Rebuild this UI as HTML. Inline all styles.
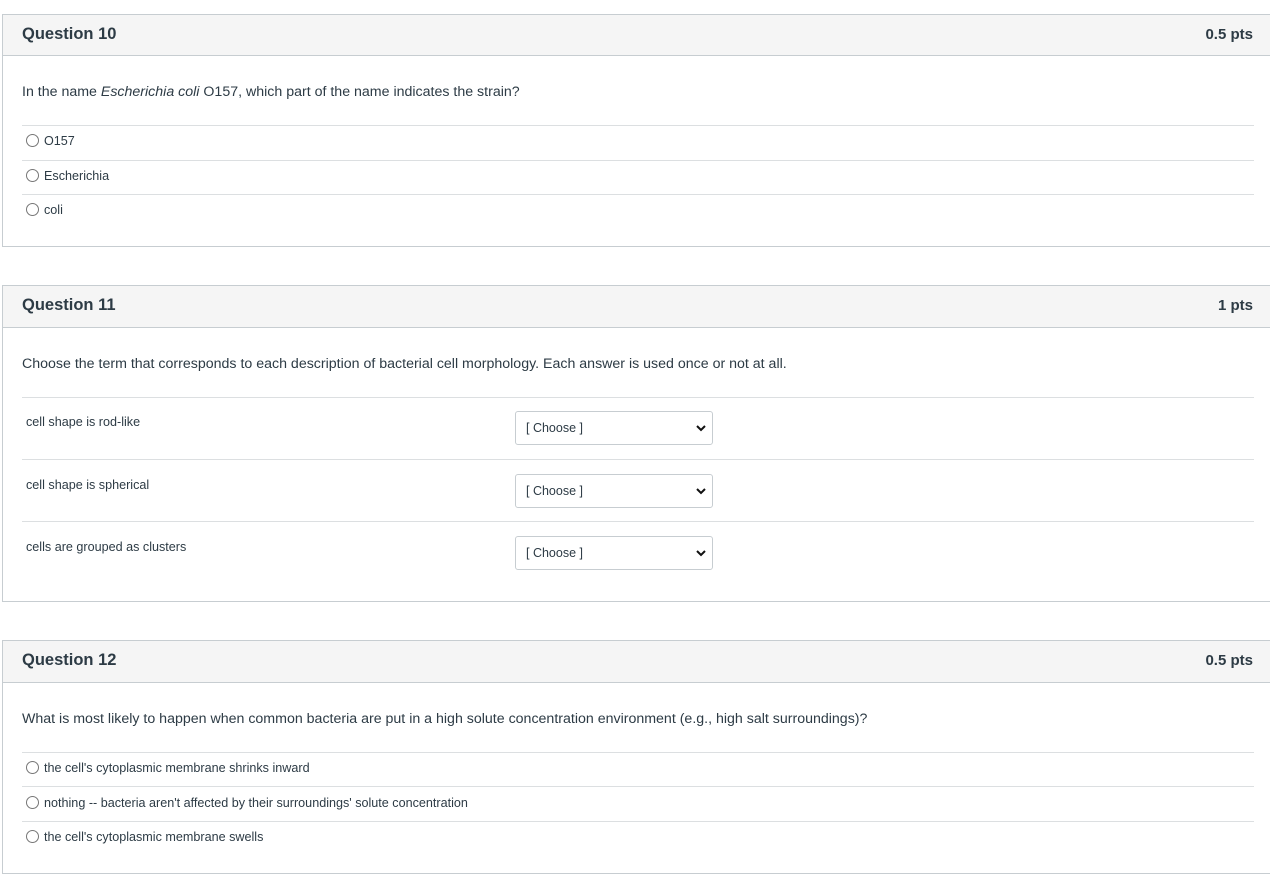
<!DOCTYPE html><html><head><style>
body{margin:0;width:1270px;height:880px;background:#fff;font-family:"Liberation Sans",sans-serif;color:#2d3b45;position:relative;overflow:hidden}
.p{position:absolute;left:2px;width:1280px;border:1px solid #c7cdd1;box-sizing:border-box}
.h{position:absolute;left:0;right:0;top:0;background:#f5f5f5;border-bottom:1px solid #c7cdd1}
.t{position:absolute;font-size:16.5px;font-weight:bold;color:#2d3b45}
.pts{position:absolute;right:28px;font-size:15px;font-weight:bold}
.a{position:absolute;font-size:14.2px;color:#2d3b45;white-space:nowrap}
.s{position:absolute;font-size:12.6px;white-space:nowrap;color:#2d3b45}
.l{position:absolute;left:19px;width:1232px;height:1px;background:#dcdfe1}
.r{display:inline-block;width:11px;height:11px;border:1px solid #777;border-radius:50%;vertical-align:-2px;margin-right:5px}
.sel{position:absolute;left:512px;width:198px;height:34px;border:1px solid #c7cdd1;border-radius:3px;box-sizing:border-box;font-size:12.5px;line-height:32px;padding-left:10px;color:#2d3b45}
.sel svg{position:absolute;right:5px;top:12px}
</style></head><body>
<div class="p" style="top:14px;height:233px">
<div class="h" style="height:40px"></div>
<div class="t" style="left:19px;top:10px">Question 10</div>
<div class="pts" style="top:11px">0.5 pts</div>
<div class="a" style="left:19px;top:69px">In the name <i>Escherichia coli</i> O157, which part of the name indicates the strain?</div>
<div class="l" style="top:110px"></div>
<div class="s" style="left:23px;top:119px"><span class="r"></span>O157</div>
<div class="l" style="top:145px"></div>
<div class="s" style="left:23px;top:154px"><span class="r"></span>Escherichia</div>
<div class="l" style="top:179px"></div>
<div class="s" style="left:23px;top:188px"><span class="r"></span>coli</div>
</div>
<div class="p" style="top:285px;height:317px">
<div class="h" style="height:41px"></div>
<div class="t" style="left:19px;top:10px">Question 11</div>
<div class="pts" style="top:11px">1 pts</div>
<div class="a" style="left:19px;top:70px">Choose the term that corresponds to each description of bacterial cell morphology. Each answer is used once or not at all.</div>
<div class="l" style="top:111px"></div>
<div class="s" style="left:23px;top:129px">cell shape is rod-like</div>
<div class="sel" style="top:125px">[ Choose ]<svg width="12" height="8" viewBox="0 0 12 8"><path d="M2 2l4 4 4-4" stroke="#111" stroke-width="2" fill="none"/></svg></div>
<div class="l" style="top:173px"></div>
<div class="s" style="left:23px;top:192px">cell shape is spherical</div>
<div class="sel" style="top:188px">[ Choose ]<svg width="12" height="8" viewBox="0 0 12 8"><path d="M2 2l4 4 4-4" stroke="#111" stroke-width="2" fill="none"/></svg></div>
<div class="l" style="top:235px"></div>
<div class="s" style="left:23px;top:254px">cells are grouped as clusters</div>
<div class="sel" style="top:250px">[ Choose ]<svg width="12" height="8" viewBox="0 0 12 8"><path d="M2 2l4 4 4-4" stroke="#111" stroke-width="2" fill="none"/></svg></div>
</div>
<div class="p" style="top:640px;height:234px">
<div class="h" style="height:41px"></div>
<div class="t" style="left:19px;top:10px">Question 12</div>
<div class="pts" style="top:11px">0.5 pts</div>
<div class="a" style="left:19px;top:70px">What is most likely to happen when common bacteria are put in a high solute concentration environment (e.g., high salt surroundings)?</div>
<div class="l" style="top:111px"></div>
<div class="s" style="left:23px;top:120px"><span class="r"></span>the cell's cytoplasmic membrane shrinks inward</div>
<div class="l" style="top:145px"></div>
<div class="s" style="left:23px;top:155px"><span class="r"></span>nothing -- bacteria aren't affected by their surroundings' solute concentration</div>
<div class="l" style="top:180px"></div>
<div class="s" style="left:23px;top:189px"><span class="r"></span>the cell's cytoplasmic membrane swells</div>
</div>
</body></html>
